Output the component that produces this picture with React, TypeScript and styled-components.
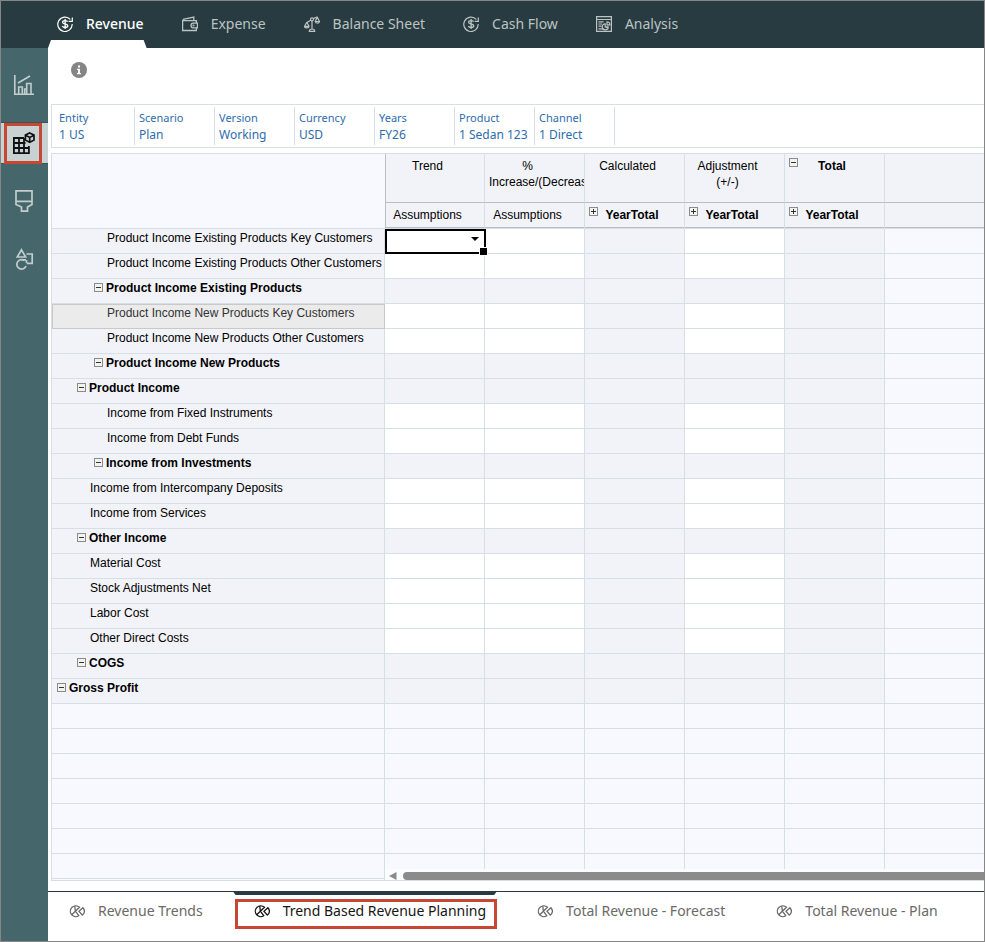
import React from "react";
import styled, { createGlobalStyle, css } from "styled-components";

const c = {
  frame: "#868686",
  bar: "#273b41",
  rail: "#45676c",
  railActive: "#c8d2d3",
  line: "#d6dfe6",
  strong: "#bbbdc0",
  cell: "#f2f3f8",
  empty: "#f8f9fe",
  red: "#c74634",
  link: "#2e6cad",
};

const Global = createGlobalStyle`
  * { box-sizing: border-box; }
  html, body, #root { height: 100%; }
  body { margin: 0; background: #fff; color: #000; font-family: "Noto Sans", sans-serif; }
  button { font: inherit; color: inherit; background: none; border: 0; padding: 0; margin: 0; cursor: pointer; }
`;

const Frame = styled.div`
  display: flex;
  flex-direction: column;
  min-height: 100%;
  border: 1px solid ${c.frame};
`;

const TopBar = styled.nav`
  display: flex;
  gap: 26px;
  height: 47px;
  padding-left: 47px;
  background: ${c.bar};
`;

const TopTab = styled.button<{ $active?: boolean }>`
  position: relative;
  display: flex;
  gap: 13px;
  align-items: center;
  padding: 0 3px 1px 9px;
  font-size: 14px;
  line-height: 20px;
  white-space: nowrap;
  color: ${(p) => (p.$active ? "#fff" : "#bcc3c3")};
  font-weight: ${(p) => (p.$active ? 500 : 400)};
  ${(p) =>
    p.$active &&
    css`
      &::after {
        content: "";
        position: absolute;
        left: 0;
        right: 0;
        bottom: 0;
        height: 8px;
        background: #fff;
        clip-path: polygon(3px 0, calc(100% - 3px) 0, 100% 100%, 0 100%);
      }
    `}
`;

const Body = styled.div`
  display: flex;
  flex: 1;
`;

const Rail = styled.nav`
  display: flex;
  flex-direction: column;
  gap: 16px;
  flex: 0 0 47px;
  padding-top: 16px;
  background: ${c.rail};
  color: #c3cdcd;
`;

const RailItem = styled.button<{ $active?: boolean }>`
  display: flex;
  align-items: center;
  height: 42px;
  padding: 0 3px;
  ${(p) =>
    p.$active &&
    css`
      background: ${c.railActive};
      color: #111;
      border-top: 1px solid #36555a;
      border-bottom: 1px solid #36555a;
    `}
`;

const RailMark = styled.span<{ $on?: boolean }>`
  display: flex;
  align-items: center;
  justify-content: center;
  width: 38px;
  height: 41px;
  padding-left: 2px;
  border: 3px solid ${(p) => (p.$on ? c.red : "transparent")};
`;

const Main = styled.main`
  display: flex;
  flex-direction: column;
  flex: 1;
  min-width: 0;
`;

const InfoRow = styled.div`
  display: flex;
  height: 56px;
  padding: 14px 23px;
`;

const InfoButton = styled.button`
  display: flex;
  width: 16px;
  height: 16px;
`;

const Pov = styled.div`
  display: flex;
  height: 44px;
  margin-left: 3px;
  padding: 2px 0;
  border: solid ${c.line};
  border-width: 1px 0 1px 1px;
`;

const PovItem = styled.button`
  display: flex;
  flex-direction: column;
  flex: 0 0 80px;
  padding: 3px 0 0 7px;
  border-right: 1px solid ${c.line};
  color: ${c.link};
  text-align: left;
  white-space: nowrap;
  & + & {
    padding-left: 4px;
  }
  &:first-child {
    flex-basis: 83px;
  }
`;

const PovName = styled.span`
  font-size: 11px;
  line-height: 16px;
`;

const PovValue = styled.span`
  font-size: 12px;
  line-height: 18px;
`;

const GridBox = styled.div`
  margin: 5px 0 10px 3px;
  border: solid ${c.line};
  border-width: 1px 0 1px 1px;
`;

const Table = styled.table`
  width: 100%;
  table-layout: fixed;
  border-collapse: separate;
  border-spacing: 0;
  font-family: "Liberation Sans", Arial, sans-serif;
  font-size: 12px;
  line-height: 16px;
`;

const Corner = styled.td`
  padding: 0;
  background: ${c.empty};
  border-bottom: 1px solid ${c.line};
`;

const HeadCell = styled.th<{ $bold?: boolean; $level: number; $first?: boolean; $last?: boolean }>`
  height: ${(p) => (p.$level === 0 ? 49 : 26)}px;
  padding: 4px 18px 0 4px;
  overflow: hidden;
  vertical-align: top;
  background: ${c.cell};
  font-weight: ${(p) => (p.$bold ? 700 : 400)};
  border-right: ${(p) => (p.$last ? 0 : 1)}px solid ${c.line};
  border-bottom: 1px solid ${(p) => (p.$level === 0 ? c.strong : c.line)};
  box-shadow: inset ${(p) => (p.$first ? "1px" : "0")} ${(p) => (p.$level === 1 ? "-1px" : "0")} 0 ${c.strong};
`;

const HeadContent = styled.div`
  display: flex;
  align-items: flex-start;
`;

const HeadLabel = styled.span`
  flex: 1;
  min-width: 0;
  text-align: center;
  white-space: pre-line;
`;

const ToggleButton = styled.button`
  display: flex;
  flex: 0 0 9px;
  height: 9px;
`;

const RowHead = styled.th<{ $bold?: boolean; $hover?: boolean }>`
  height: 25px;
  padding: 1px 0 0;
  vertical-align: top;
  text-align: left;
  white-space: nowrap;
  background: ${(p) => (p.$hover ? "#ebebeb" : c.cell)};
  color: ${(p) => (p.$hover ? "#333" : "#000")};
  font-weight: ${(p) => (p.$bold ? 700 : 400)};
  border-right: 1px solid ${c.line};
  border-bottom: 1px solid ${c.line};
  ${(p) =>
    p.$hover &&
    css`
      border-color: #c9c9c9;
      box-shadow: inset 1px 1px 0 #c9c9c9;
    `}
`;

const indents = [5, 25, 42];

const RowLabel = styled.div<{ $depth: number; $leaf: boolean }>`
  display: flex;
  gap: 3px;
  padding-left: ${(p) => indents[p.$depth] + (p.$leaf ? 13 : 0)}px;
  ${ToggleButton} {
    margin-top: 3px;
  }
`;

const Cell = styled.td<{ $tone: "edit" | "read" | "blank"; $end?: boolean; $short?: boolean }>`
  position: relative;
  height: ${(p) => (p.$short ? 15 : 25)}px;
  padding: 0;
  background: ${(p) => (p.$tone === "edit" ? "#fff" : p.$tone === "read" ? c.cell : c.empty)};
  border-right: ${(p) => (p.$end ? 0 : 1)}px solid ${c.line};
  border-bottom: ${(p) => (p.$short ? 0 : 1)}px solid ${c.line};
`;

const PickerBox = styled.div`
  position: absolute;
  z-index: 1;
  inset: 0 -2px -1px 0;
  border: 2px solid #000;
  background: #fff;
  &::after {
    content: "";
    position: absolute;
    right: -4px;
    bottom: -4px;
    width: 7px;
    height: 7px;
    background: #000;
    border: 1px solid #fff;
  }
`;

const Picker = styled.select`
  display: block;
  width: 100%;
  height: 100%;
  appearance: none;
  border: 0;
  outline: 0;
  background: transparent;
  font: inherit;
`;

const Caret = styled.svg`
  position: absolute;
  right: 5px;
  top: 6px;
  pointer-events: none;
`;

const FootHead = styled.td`
  padding: 0;
  vertical-align: top;
  background: ${c.empty};
  border-right: 1px solid ${c.line};
`;

const FootFill = styled.div`
  height: 25px;
  border-bottom: 1px solid ${c.line};
`;

const ScrollCell = styled.td`
  padding: 0;
`;

const ScrollBar = styled.div`
  display: flex;
  align-items: flex-end;
  gap: 6px;
  height: 11px;
  padding-left: 4px;
  background: #fbfcfd;
`;

const Thumb = styled.span`
  flex: 1;
  height: 8px;
  border-radius: 4px 0 0 4px;
  background: #8b8b8b;
`;

const BottomTabs = styled.nav`
  display: flex;
  flex: 1;
  gap: 19px;
  align-items: flex-start;
  min-height: 50px;
  border-top: 1px solid ${c.bar};
`;

const BottomTab = styled.button<{ $active?: boolean }>`
  position: relative;
  padding: 7px 0 0 2px;
  color: ${(p) => (p.$active ? "#161513" : "#6b6967")};
  ${(p) =>
    p.$active &&
    css`
      &::before {
        content: "";
        position: absolute;
        left: 0;
        right: 0;
        top: -1px;
        height: 4px;
        background: ${c.bar};
        clip-path: polygon(0 0, 100% 0, calc(100% - 3px) 100%, 3px 100%);
      }
    `}
`;

const TabMark = styled.span<{ $on?: boolean }>`
  display: flex;
  gap: 13px;
  align-items: center;
  height: 30px;
  padding: 0 8px 6px 16px;
  border: 3px solid ${(p) => (p.$on ? c.red : "transparent")};
  font-size: 14px;
  line-height: 20px;
  white-space: nowrap;
`;

const Icon = styled.svg.attrs({ "aria-hidden": true, fill: "none", stroke: "currentColor" })<{ $size: number }>`
  flex: none;
  width: ${(p) => p.$size}px;
  height: ${(p) => p.$size}px;
`;

const Dollar = () => (
  <Icon $size={16} viewBox="0 0 16 16" strokeWidth="1.2">
    <path d="M13.3 3.4A7.2 7.2 0 1 0 15.2 8" />
    <path d="M15.3 1.4v3.9h-3.7" />
    <path d="M10.6 5.7C10 4.9 9.2 4.6 8.1 4.6c-1.5 0-2.5.6-2.500 1.600 0 2.500 5.200 1.100 5.200 3.600 0 1.100-1.100 1.700-2.700 1.700-1.200 0-2.200-.4-2.800-1.300M8.100 3v10" strokeWidth="1.3" />
  </Icon>
);

const Wallet = () => (
  <Icon $size={16} viewBox="0 0 16 16" strokeWidth="1.3">
    <path d="M14.400 7V4.600H1.500c-.6 0-.9-.4-.9-.8M.6 3.800v10.700h13.800V12M1 3.300 11.800 1v3.500" />
    <path d="M15.400 7.200v4.600h-4.100a2.300 2.300 0 0 1 0-4.600z" />
    <circle cx="11.500" cy="9.500" r=".4" />
  </Icon>
);

const Scales = () => (
  <Icon $size={16} viewBox="0 0 16 16" strokeWidth="1.2">
    <circle cx="8" cy="3.300" r="1.500" />
    <path d="M6.800 4.200 2.800 6.600M9.300 2.600 13.600.8M8 4.900V13M5.300 15.300c0-1.500.9-2.300 2.700-2.300s2.700.8 2.700 2.300z" />
    <path d="M2.800 6.300.6 10.200M2.800 6.300 5 10.200M.5 10.300h4.600c-.2 2.200-4.400 2.200-4.600 0zM13.300 1.300l-2 4M13.300 1.300l2.100 4M11.200 5.500h4.300c-.2 2.100-4.100 2.100-4.300 0z" />
  </Icon>
);

const Report = () => (
  <Icon $size={16} viewBox="0 0 16 16" strokeWidth="1.2">
    <path d="M.6.6h14.800v14.800H.6zM.6 3.500h14.800M2.500 5.800h5M2.500 8h3.500M2.500 10.200h3M2.500 12.800h5" />
    <path d="M9.200 7.800a3 3 0 1 0 3 3h-3zM11 5.800v3h3a3 3 0 0 0-3-3zM10 11l2.500 2" />
  </Icon>
);

const Pie = () => (
  <Icon $size={16} viewBox="0 0 16 16" strokeWidth="1.300">
    <path d="M10.500 4.300A5.400 5.400 0 1 0 9.700 12.700L6.400 8.200z" />
    <path d="M6.400 8.200 5.700 2.900M6.400 8.200l-4 3.800" />
    <path d="M13.900 4.700 10 8.300l3.300 3.800c2.600-1.900 2.800-5.100.6-7.400z" />
  </Icon>
);

const ChartIcon = () => (
  <Icon $size={20} viewBox="0 0 20 20" strokeWidth="1.600">
    <path d="M.8 0v19.200H20M4.700 19v-7h3.600v7M10.700 19v-5h2M12.700 19V8.500h4.300V19M4 8l12-7" />
  </Icon>
);

const GridIcon = () => (
  <Icon $size={22} viewBox="0 0 22 22" strokeWidth="1.800">
    <path d="M11 6H.9v15.100h15V14M1 11h11.500M1 16h15M6 6v15M11 6v15" />
    <path d="m16.700.9 4.300 2.200v5l-4.300 2.300-4.300-2.300v-5zM12.500 3.200l4.200 2.200L21 3.200M16.700 5.400v5" strokeWidth="1.700" />
  </Icon>
);

const BrushIcon = () => (
  <Icon $size={22} viewBox="0 0 22 22" strokeWidth="1.700">
    <path d="M3 .9h16v13.600l-4.500 2.500v4.100h-6V17L3 14.500zM3 11.300h16" />
  </Icon>
);

const ShapesIcon = () => (
  <Icon $size={22} viewBox="0 0 22 22" strokeWidth="1.700">
    <path d="M8.500 1.800 12.600 9H4.300zM13.500 6h5.700v9.300h-5.500M13.500 12v3M11.500 12.700a4.700 4.700 0 1 0 1.500 5.300M8 11.900h5" />
  </Icon>
);

const InfoIcon = () => (
  <Icon $size={16} viewBox="0 0 16 16" strokeWidth="0">
    <circle cx="8" cy="8" r="8" fill="#858585" />
    <path d="M7 3.500h2v2H7zM6 6.700h3V11h1v1.300H6V11h1V8H6z" fill="#fff" />
  </Icon>
);

function Toggle({ open, name }: { open: boolean; name: string }) {
  return (
    <ToggleButton aria-label={`${open ? "Collapse" : "Expand"} ${name}`} aria-expanded={open}>
      <Icon $size={9} viewBox="0 0 9 9" shapeRendering="crispEdges">
        <path d="M.5.5h8v8h-8z" stroke="#8a8b8c" fill="#f3f3ee" />
        <path d={open ? "M2 4.500h5" : "M2 4.500h5M4.500 2v5"} stroke="#333" />
      </Icon>
    </ToggleButton>
  );
}

const topTabs = [
  { name: "Revenue", icon: <Dollar />, active: true },
  { name: "Expense", icon: <Wallet /> },
  { name: "Balance Sheet", icon: <Scales /> },
  { name: "Cash Flow", icon: <Dollar /> },
  { name: "Analysis", icon: <Report /> },
];

const railItems = [
  { name: "Overview", icon: <ChartIcon /> },
  { name: "Planning", icon: <GridIcon />, active: true },
  { name: "Format", icon: <BrushIcon /> },
  { name: "Drivers", icon: <ShapesIcon /> },
];

const pov = [
  ["Entity", "1 US"],
  ["Scenario", "Plan"],
  ["Version", "Working"],
  ["Currency", "USD"],
  ["Years", "FY26"],
  ["Product", "1 Sedan 123"],
  ["Channel", "1 Direct"],
];

type Column = { title: string; sub: string; total?: boolean; expand?: boolean; editable?: boolean };
const columns: Column[] = [
  { title: "Trend", sub: "Assumptions", editable: true },
  { title: "%\nIncrease/(Decrease)", sub: "Assumptions", editable: true },
  { title: "Calculated", sub: "YearTotal", expand: true },
  { title: "Adjustment\n(+/-)", sub: "YearTotal", expand: true, editable: true },
  { title: "Total", sub: "YearTotal", expand: true, total: true },
];

type Row = { name: string; depth: number; parent?: boolean };
const rows: Row[] = [
  { name: "Product Income Existing Products Key Customers", depth: 2 },
  { name: "Product Income Existing Products Other Customers", depth: 2 },
  { name: "Product Income Existing Products", depth: 2, parent: true },
  { name: "Product Income New Products Key Customers", depth: 2 },
  { name: "Product Income New Products Other Customers", depth: 2 },
  { name: "Product Income New Products", depth: 2, parent: true },
  { name: "Product Income", depth: 1, parent: true },
  { name: "Income from Fixed Instruments", depth: 2 },
  { name: "Income from Debt Funds", depth: 2 },
  { name: "Income from Investments", depth: 2, parent: true },
  { name: "Income from Intercompany Deposits", depth: 1 },
  { name: "Income from Services", depth: 1 },
  { name: "Other Income", depth: 1, parent: true },
  { name: "Material Cost", depth: 1 },
  { name: "Stock Adjustments Net", depth: 1 },
  { name: "Labor Cost", depth: 1 },
  { name: "Other Direct Costs", depth: 1 },
  { name: "COGS", depth: 1, parent: true },
  { name: "Gross Profit", depth: 0, parent: true },
];

const hoveredRow = 3;
const blankRows = [0, 1, 2, 3, 4, 5];
const bottomTabs = ["Revenue Trends", "Trend Based Revenue Planning", "Total Revenue - Forecast", "Total Revenue - Plan"];

const LabelColumn = styled.col`
  width: 333px;
`;
const DataColumn = styled.col`
  width: 100px;
`;

function PlanningGrid() {
  return (
    <Table>
      <colgroup>
        <LabelColumn />
        {columns.map((col) => (
          <DataColumn key={col.title} />
        ))}
        <col />
      </colgroup>
      <thead>
        <tr>
          <Corner rowSpan={2} />
          {columns.map((col, i) => (
            <HeadCell key={col.title} scope="col" $level={0} $bold={col.total} $first={i === 0}>
              <HeadContent>
                {col.total && <Toggle open name={col.title} />}
                <HeadLabel>{col.title}</HeadLabel>
              </HeadContent>
            </HeadCell>
          ))}
          <HeadCell $level={0} $last />
        </tr>
        <tr>
          {columns.map((col, i) => (
            <HeadCell key={col.title} scope="col" $level={1} $bold={col.expand} $first={i === 0}>
              <HeadContent>
                {col.expand && <Toggle open={false} name={`${col.title} ${col.sub}`} />}
                <HeadLabel>{col.sub}</HeadLabel>
              </HeadContent>
            </HeadCell>
          ))}
          <HeadCell $level={1} $last />
        </tr>
      </thead>
      <tbody>
        {rows.map((row, r) => (
          <tr key={row.name}>
            <RowHead scope="row" $bold={row.parent} $hover={r === hoveredRow}>
              <RowLabel $depth={row.depth} $leaf={!row.parent}>
                {row.parent && <Toggle open name={row.name} />}
                {row.name}
              </RowLabel>
            </RowHead>
            {columns.map((col, i) => (
              <Cell key={col.title} $tone={col.editable && !row.parent ? "edit" : "read"}>
                {r === 0 && i === 0 && (
                  <PickerBox>
                    <Picker aria-label={`Trend for ${row.name}`} defaultValue="">
                      <option value="" />
                    </Picker>
                    <Caret width="8" height="4" viewBox="0 0 8 4" aria-hidden>
                      <path d="M0 0h8L4 4z" />
                    </Caret>
                  </PickerBox>
                )}
              </Cell>
            ))}
            <Cell $tone="blank" $end />
          </tr>
        ))}
        {blankRows.map((b) => (
          <tr key={b}>
            <Cell $tone="blank" />
            {columns.map((col) => (
              <Cell key={col.title} $tone="blank" />
            ))}
            <Cell $tone="blank" $end />
          </tr>
        ))}
        <tr>
          <FootHead rowSpan={2}>
            <FootFill />
          </FootHead>
          {columns.map((col) => (
            <Cell key={col.title} $tone="blank" $short />
          ))}
          <Cell $tone="blank" $end $short />
        </tr>
        <tr>
          <ScrollCell colSpan={6}>
            <ScrollBar>
              <svg width="8" height="8" viewBox="0 0 8 8" aria-hidden>
                <path d="M7.500 0v8L0 4z" fill="#8b8b8b" />
              </svg>
              <Thumb />
            </ScrollBar>
          </ScrollCell>
        </tr>
      </tbody>
    </Table>
  );
}

export default function App() {
  return (
    <>
      <Global />
      <Frame>
        <TopBar>
          {topTabs.map((t) => (
            <TopTab key={t.name} $active={t.active}>
              {t.icon}
              {t.name}
            </TopTab>
          ))}
        </TopBar>
        <Body>
          <Rail>
            {railItems.map((t) => (
              <RailItem key={t.name} aria-label={t.name} $active={t.active}>
                <RailMark $on={t.active}>{t.icon}</RailMark>
              </RailItem>
            ))}
          </Rail>
          <Main>
            <InfoRow>
              <InfoButton aria-label="Instructions">
                <InfoIcon />
              </InfoButton>
            </InfoRow>
            <Pov>
              {pov.map(([name, value]) => (
                <PovItem key={name}>
                  <PovName>{name}</PovName>
                  <PovValue>{value}</PovValue>
                </PovItem>
              ))}
            </Pov>
            <GridBox>
              <PlanningGrid />
            </GridBox>
            <BottomTabs>
              {bottomTabs.map((name, i) => (
                <BottomTab key={name} $active={i === 1}>
                  <TabMark $on={i === 1}>
                    <Pie />
                    {name}
                  </TabMark>
                </BottomTab>
              ))}
            </BottomTabs>
          </Main>
        </Body>
      </Frame>
    </>
  );
}
